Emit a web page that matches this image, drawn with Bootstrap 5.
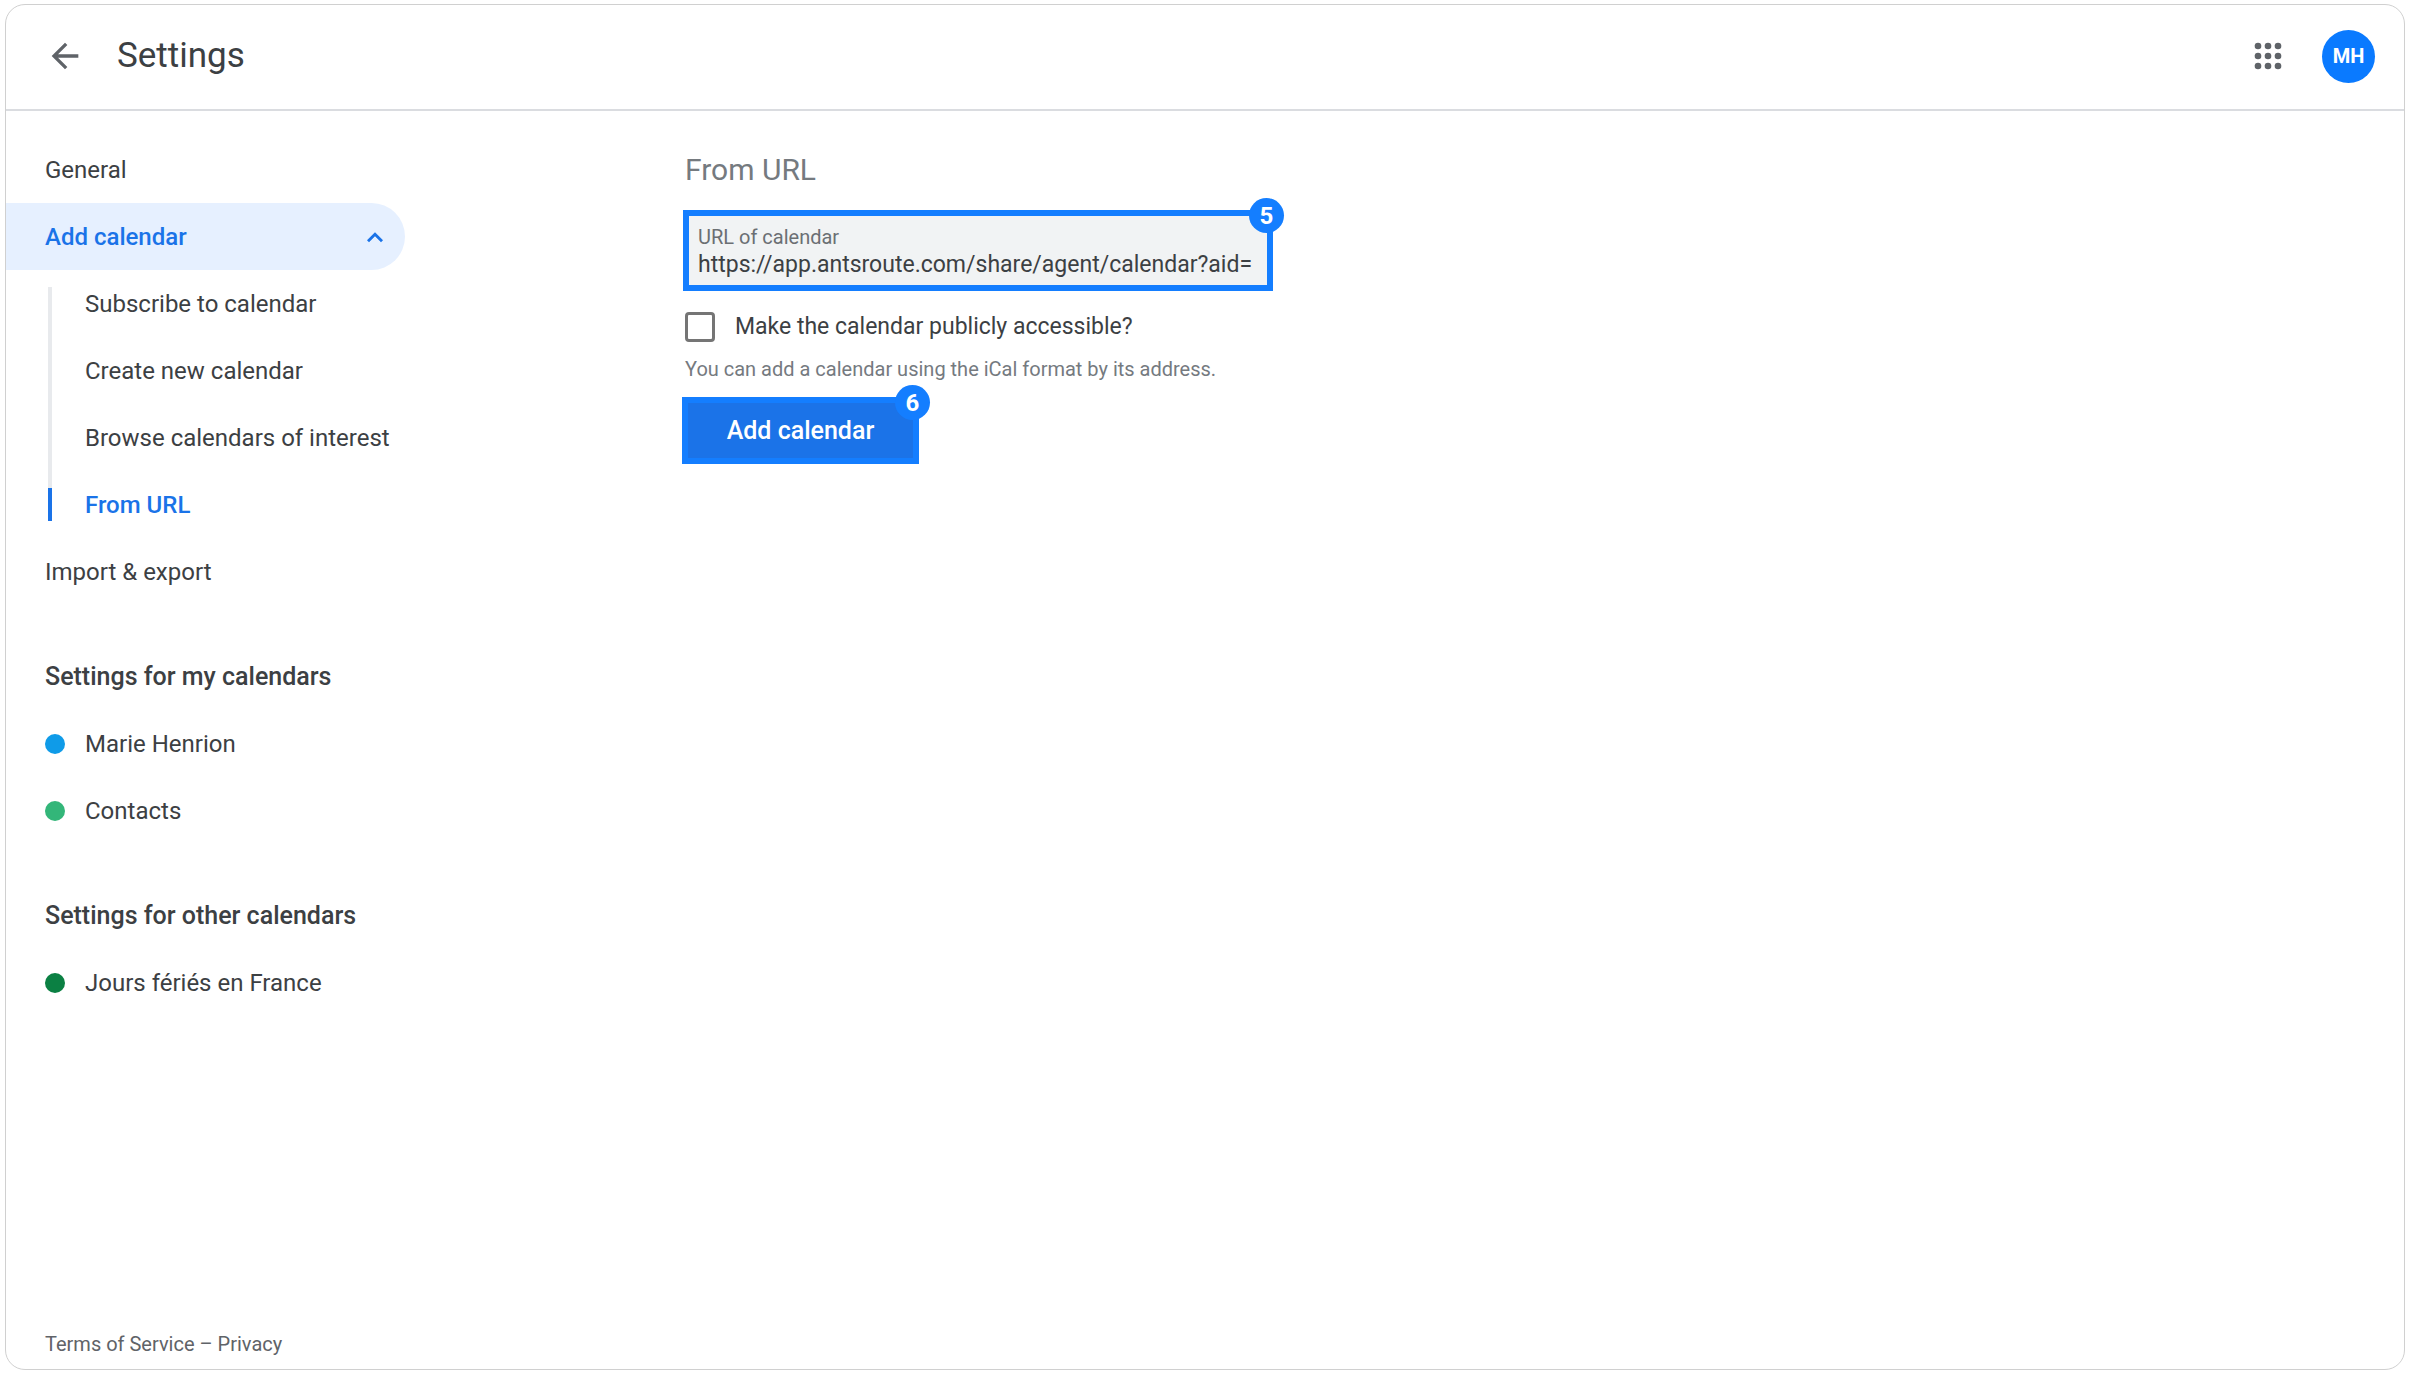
<!DOCTYPE html>
<html lang="en">
<head>
<meta charset="utf-8">
<meta name="viewport" content="width=device-width, initial-scale=1">
<title>Settings</title>
<link href="https://cdn.jsdelivr.net/npm/bootstrap@5.3.0/dist/css/bootstrap.min.css" rel="stylesheet">
<style>
  body { font-family: Roboto, "Noto Sans", sans-serif; font-size: 24px; line-height: 32px; color: #3c4043; background: #fff; padding: 4px 4px 4px 5px; }
  a { color: inherit; text-decoration: none; }
  .app-frame { min-height: calc(100vh - 8px); border: 1px solid #d0d0d0; border-radius: 20px; overflow: hidden; }
  .app-header { height: 106px; padding: 0 29px 2px 39px; border-bottom: 2px solid #dadce0; }
  .app-title { font-size: 35px; line-height: 44px; font-weight: 400; }
  .icon-btn { background: none; border: 0; padding: 0; width: 40px; height: 40px; color: #5f6368; }
  .icon-btn svg { display: block; width: 40px; height: 40px; fill: currentColor; }
  .avatar { width: 53px; height: 53px; margin-left: 34px; background: #0a7aff; color: #fff; font-size: 20px; font-weight: 700; border: 0; padding: 0; }

  .side { width: 399px; padding: 25px 0 11px; }
  .side-row { display: flex; align-items: center; height: 67px; padding: 0 20px 0 39px; white-space: nowrap; }
  .side-row.is-open { padding-right: 10px; background: #e6f0ff; color: #1a73e8; font-weight: 500; border-radius: 0 34px 34px 0; }
  .side-head { font-size: 25px; font-weight: 500; margin: 38px 0 0; }
  .side-sub { position: relative; }
  .side-sub::before { content: ""; position: absolute; left: 42px; top: 17px; bottom: 50px; width: 4px; background: #e8eaed; }
  .side-sub .side-row { padding-left: 79px; position: relative; }
  .side-sub .active { color: #1a73e8; font-weight: 500; }
  .side-sub .active::before { content: ""; position: absolute; left: 42px; top: 17px; bottom: 17px; width: 4px; background: #1a73e8; }
  .dot { width: 20px; height: 20px; border-radius: 50%; margin-right: 20px; }
  .dot-blue { background: #0f9be8; }
  .dot-mint { background: #33b679; }
  .dot-green { background: #0b8043; }
  .chev { width: 40px; height: 40px; fill: currentColor; }
  .side-foot { font-size: 20px; line-height: 28px; padding-left: 39px; color: #5f6368; }

  .pane { padding: 37px 40px 40px 280px; }
  .pane-title { font-size: 30px; line-height: 44px; font-weight: 400; color: #757a7f; }
  .step { position: relative; border: 6px solid #147eff; }
  .step-no { position: absolute; top: -18px; right: -17px; width: 35px; height: 35px; border-radius: 50%; background: #147eff; color: #fff; font-size: 24px; font-weight: 700; }
  .url-step { width: 590px; margin: 18px 0 0 -2px; padding: 8px 6px 6px 9px; background: #f1f3f4; }
  .url-step label { display: block; font-size: 20px; line-height: 26px; color: #6b6f73; }
  .url-step input { display: block; width: 100%; border: 0; padding: 0; background: none; font-size: 23px; line-height: 29px; height: 29px; color: #3c4043; outline: 0; }
  .public-row { margin-top: 20px; gap: 20px; font-size: 23px; }
  .public-row input { appearance: none; width: 30px; height: 30px; margin: 0; border: 3px solid #757575; border-radius: 4px; background: #fff; }
  .hint { font-size: 20px; line-height: 28px; color: #757a7f; margin: 12px 0 0; }
  .add-step { width: 237px; margin: 14px 0 0 -3px; }
  .add-step button { display: block; width: 100%; height: 55px; padding: 0; border: 0; background: #1b73e8; color: #fff; font-size: 25px; font-weight: 500; }
</style>
</head>
<body>
<div class="app-frame d-flex flex-column">
  <header class="app-header d-flex align-items-center">
    <button class="icon-btn" type="button" aria-label="Back">
      <svg viewBox="0 0 24 24"><path d="M20 11H7.83l5.59-5.59L12 4l-8 8 8 8 1.41-1.41L7.83 13H20v-2z"/></svg>
    </button>
    <h1 class="app-title mb-0 ms-4 ps-2">Settings</h1>
    <button class="icon-btn ms-auto" type="button" aria-label="Apps">
      <svg viewBox="0 0 24 24"><circle cx="6" cy="6" r="2"/><circle cx="12" cy="6" r="2"/><circle cx="18" cy="6" r="2"/><circle cx="6" cy="12" r="2"/><circle cx="12" cy="12" r="2"/><circle cx="18" cy="12" r="2"/><circle cx="6" cy="18" r="2"/><circle cx="12" cy="18" r="2"/><circle cx="18" cy="18" r="2"/></svg>
    </button>
    <button class="avatar rounded-circle" type="button" aria-label="Account">MH</button>
  </header>

  <div class="d-flex flex-grow-1">
    <aside class="side d-flex flex-column flex-shrink-0">
      <nav aria-label="Settings">
        <a class="side-row" href="#general">General</a>
        <a class="side-row is-open" href="#add" aria-expanded="true">Add calendar
          <svg class="chev ms-auto" viewBox="0 0 24 24" aria-hidden="true"><path d="M12 9.2l-4.8 4.7 1.2 1.2 3.6-3.6 3.6 3.6 1.2-1.2z"/></svg>
        </a>
        <ul class="side-sub list-unstyled mb-0">
          <li><a class="side-row" href="#subscribe">Subscribe to calendar</a></li>
          <li><a class="side-row" href="#create">Create new calendar</a></li>
          <li><a class="side-row" href="#browse">Browse calendars of interest</a></li>
          <li><a class="side-row active" href="#url" aria-current="page">From URL</a></li>
        </ul>
        <a class="side-row" href="#import">Import &amp; export</a>
        <h2 class="side-row side-head">Settings for my calendars</h2>
        <a class="side-row" href="#marie"><span class="dot dot-blue"></span>Marie Henrion</a>
        <a class="side-row" href="#contacts"><span class="dot dot-mint"></span>Contacts</a>
        <h2 class="side-row side-head">Settings for other calendars</h2>
        <a class="side-row" href="#holidays"><span class="dot dot-green"></span>Jours fériés en France</a>
      </nav>
      <footer class="side-foot mt-auto"><a href="#terms">Terms of Service</a> – <a href="#privacy">Privacy</a></footer>
    </aside>

    <main class="pane flex-grow-1">
      <h2 class="pane-title mb-0">From URL</h2>
      <form>
        <div class="step url-step">
          <label for="cal-url">URL of calendar</label>
          <input id="cal-url" type="text" value="https://app.antsroute.com/share/agent/calendar?aid=">
          <span class="step-no d-flex align-items-center justify-content-center">5</span>
        </div>
        <div class="public-row d-flex align-items-center">
          <input id="cal-public" type="checkbox">
          <label for="cal-public">Make the calendar publicly accessible?</label>
        </div>
        <p class="hint">You can add a calendar using the iCal format by its address.</p>
        <div class="step add-step">
          <button type="button">Add calendar</button>
          <span class="step-no d-flex align-items-center justify-content-center">6</span>
        </div>
      </form>
    </main>
  </div>
</div>
<script src="https://cdn.jsdelivr.net/npm/bootstrap@5.3.0/dist/js/bootstrap.bundle.min.js"></script>
</body>
</html>
